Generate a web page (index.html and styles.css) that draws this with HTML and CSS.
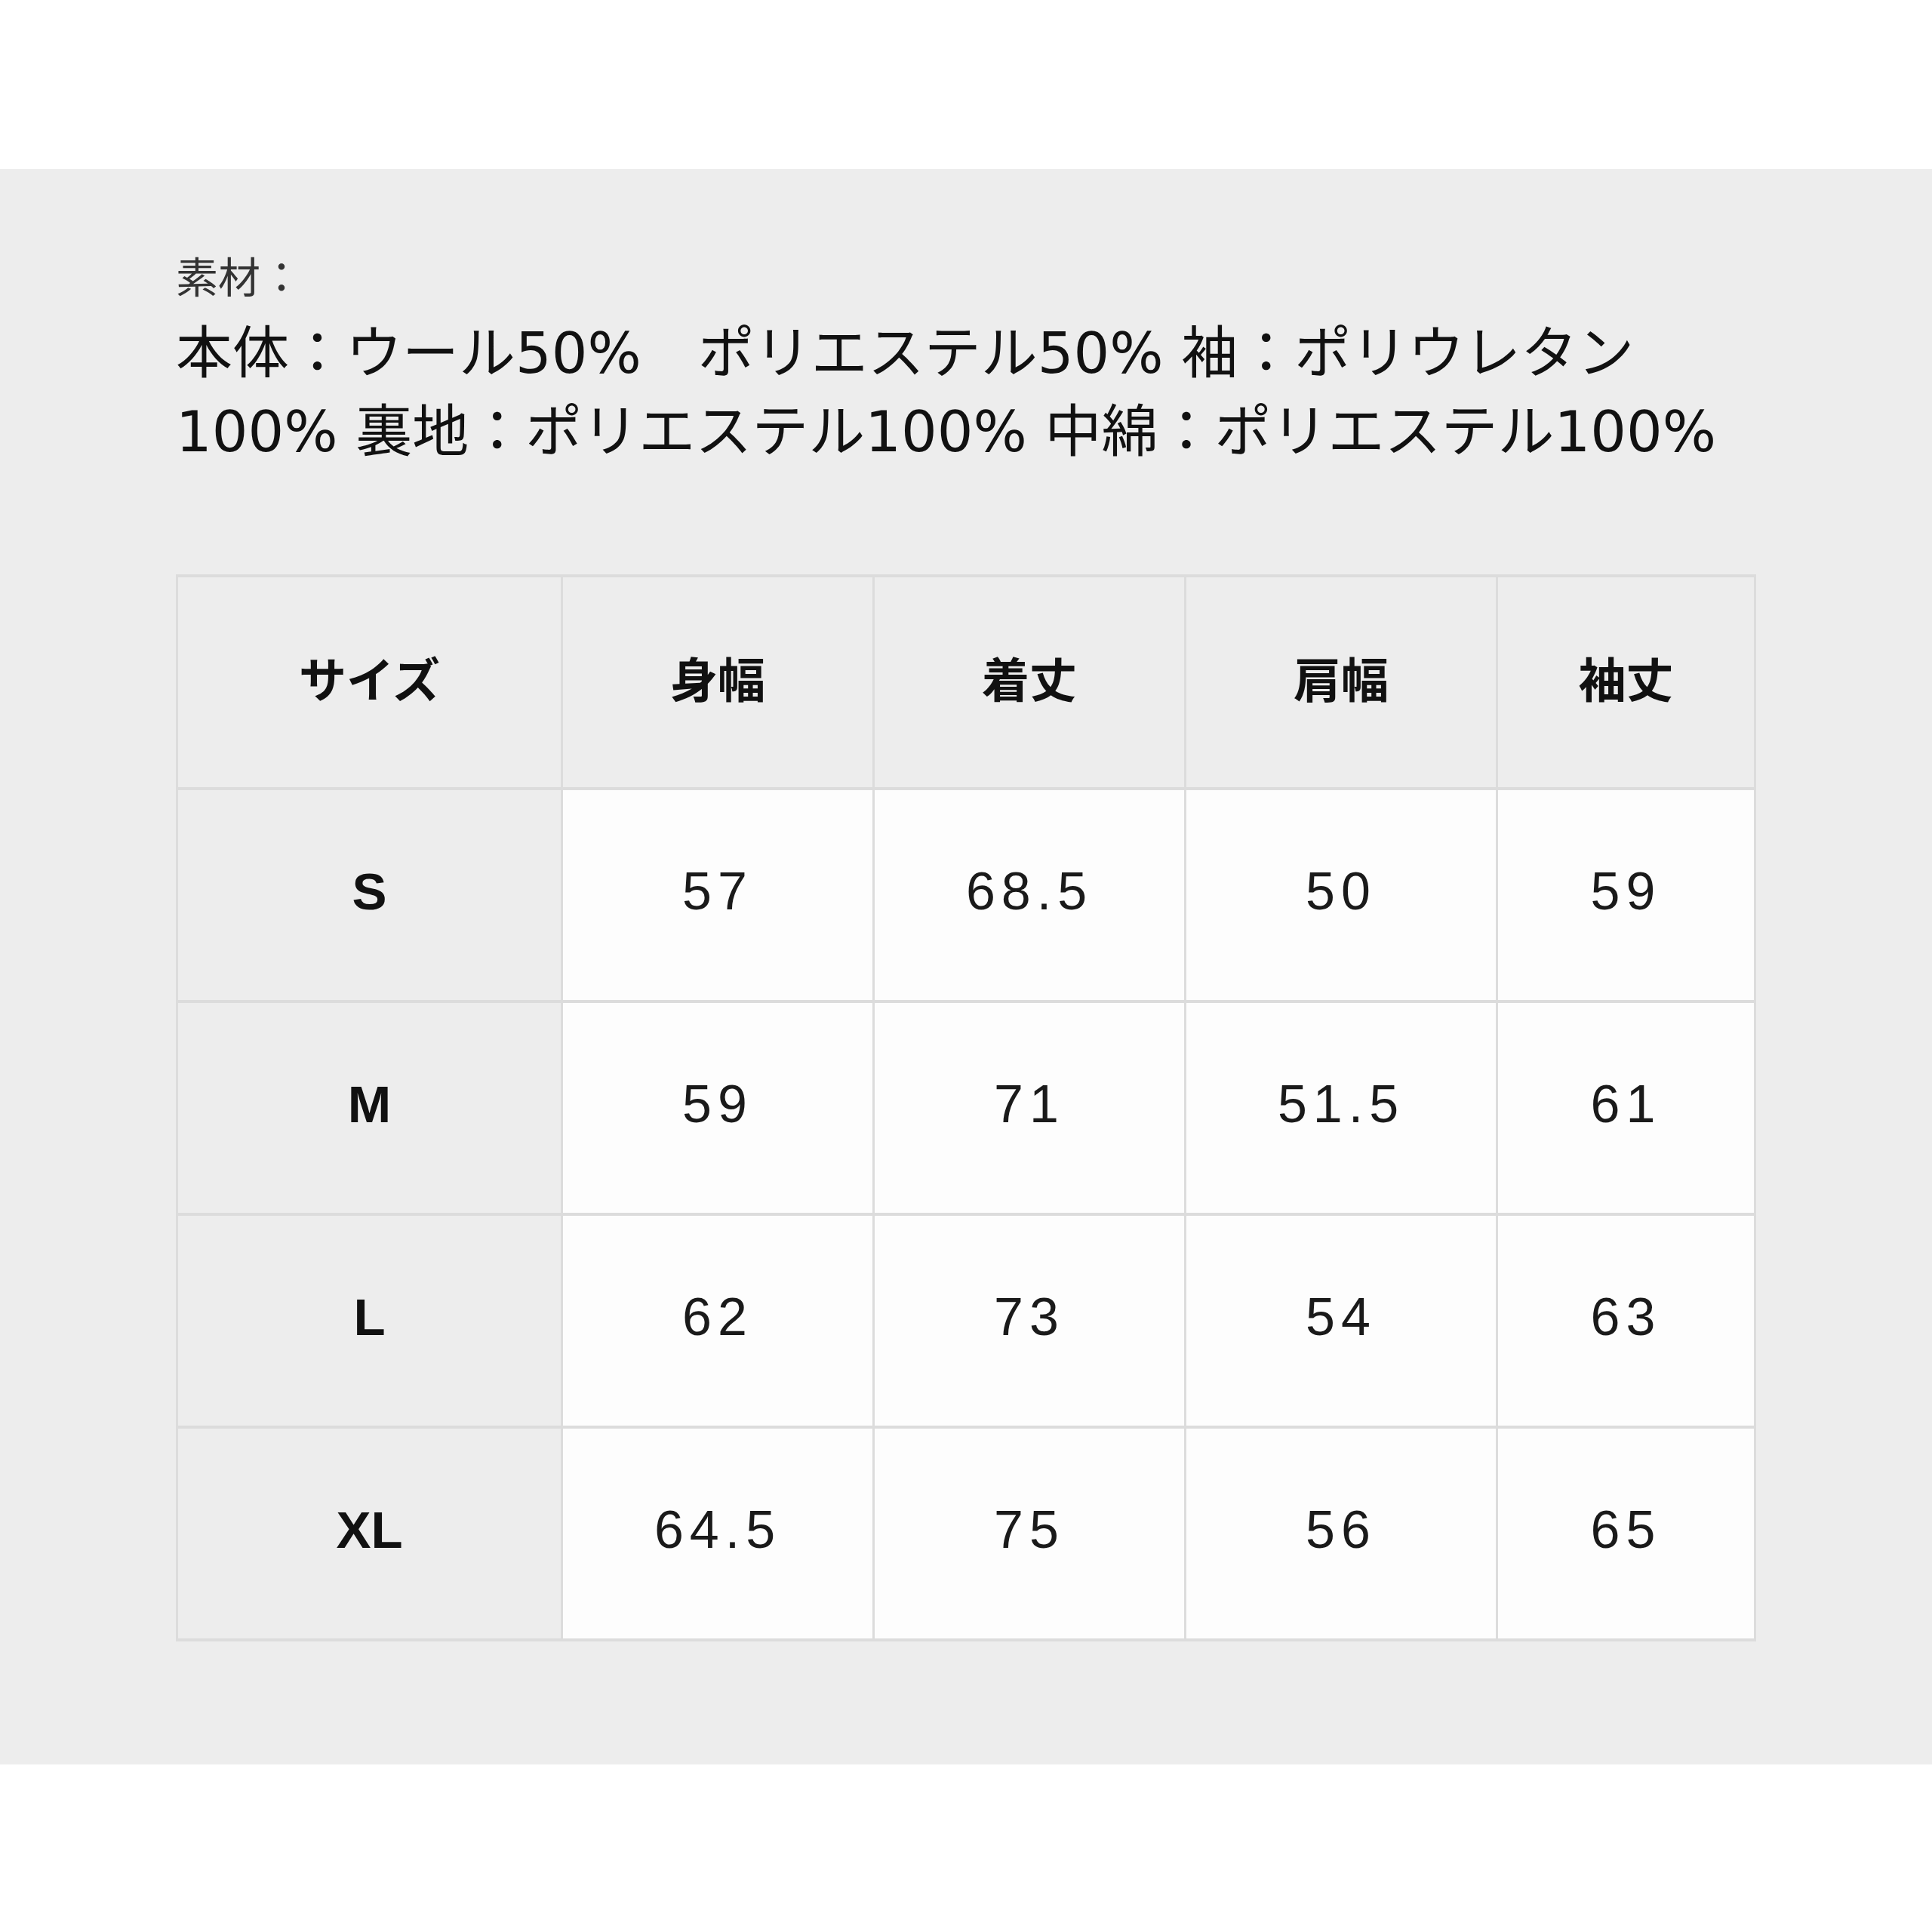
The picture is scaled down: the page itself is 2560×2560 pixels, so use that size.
FILE: index.html
```html
<!DOCTYPE html>
<html lang="ja">
<head>
<meta charset="utf-8">
<title>サイズ表</title>
<link rel="stylesheet" href="styles.css">
</head>
<body>
<div class="page">
  <section class="panel">
    <div class="material">
      <p class="material-label">素材：</p>
      <p class="material-line">本体：ウール50%　ポリエステル50% 袖：ポリウレタン</p>
      <p class="material-line">100% 裏地：ポリエステル100% 中綿：ポリエステル100%</p>
    </div>
    <table class="size-table">
      <colgroup>
        <col class="c-size">
        <col class="c-mid">
        <col class="c-mid">
        <col class="c-mid">
        <col class="c-last">
      </colgroup>
      <thead>
        <tr>
          <th>サイズ</th>
          <th>身幅</th>
          <th>着丈</th>
          <th>肩幅</th>
          <th>袖丈</th>
        </tr>
      </thead>
      <tbody>
        <tr><th class="size">S</th><td>57</td><td>68.5</td><td>50</td><td>59</td></tr>
        <tr><th class="size">M</th><td>59</td><td>71</td><td>51.5</td><td>61</td></tr>
        <tr><th class="size">L</th><td>62</td><td>73</td><td>54</td><td>63</td></tr>
        <tr><th class="size">XL</th><td>64.5</td><td>75</td><td>56</td><td>65</td></tr>
      </tbody>
    </table>
  </section>
</div>
</body>
</html>
```

FILE: styles.css
```css
html, body {
  margin: 0;
  padding: 0;
  background: #ffffff;
}

body {
  font-family: "Noto Sans CJK JP", "Noto Sans", sans-serif;
  color: #111111;
}

.page {
  padding-top: 224px;
  padding-bottom: 225px;
}

.panel {
  background: #ededed;
  padding: 88px 236px 163px 233px;
}

.material {
  margin-bottom: 137px;
}

.material p {
  margin: 0;
  height: 104px;
  line-height: 104px;
  white-space: nowrap;
}

.material-label {
  font-size: 56px;
  color: #333333;
}

.material-line {
  font-family: "DejaVu Sans", "Noto Sans CJK JP", sans-serif;
  font-size: 75px;
  color: #111111;
}

.size-table {
  width: 2088px;
  border-collapse: collapse;
  table-layout: fixed;
}

.c-size { width: 510px; }
.c-mid { width: 413px; }
.c-last { width: 342px; }

.size-table th,
.size-table td {
  height: 268px;
  padding: 0 0 10px 0;
  text-align: center;
  vertical-align: middle;
  border-top: 4px solid #dcdcdc;
  border-bottom: 4px solid #dcdcdc;
  border-left: 3px solid #dcdcdc;
  border-right: 3px solid #dcdcdc;
}

.size-table thead th {
  height: 262px;
  padding-bottom: 16px;
  background: #ededed;
  font-size: 63px;
  font-weight: 700;
  color: #111111;
}

.size-table th.size {
  background: #ededed;
  font-family: "Liberation Sans", Arial, sans-serif;
  font-size: 69px;
  font-weight: 700;
  color: #111111;
}

.size-table td {
  background: #fdfdfd;
  font-family: "Liberation Sans", Arial, sans-serif;
  font-size: 70px;
  font-weight: 400;
  letter-spacing: 8px;
  color: #1a1a1a;
}
```
